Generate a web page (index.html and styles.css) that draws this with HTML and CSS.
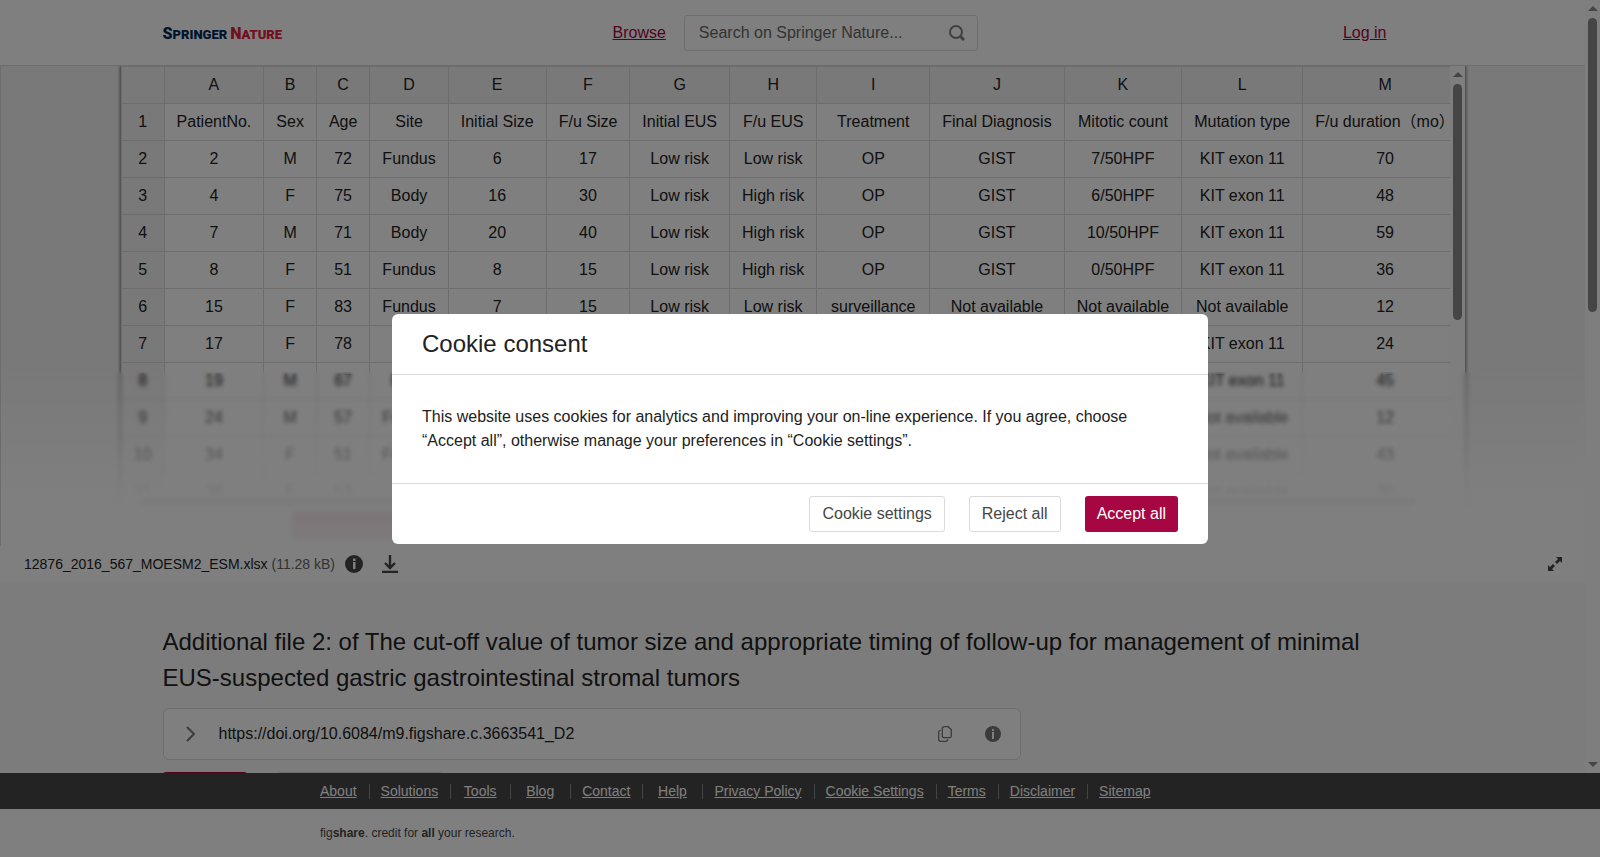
FILE: index.html
```html
<!DOCTYPE html>
<html lang="en">
<head>
  <meta charset="UTF-8" />
  <title>Additional file 2</title>
  <meta name="viewport" content="width=device-width, initial-scale=1.0"/>
  <link rel="stylesheet" href="styles.css">
</head>
<body>

  <div class="page">
    <div class="page-content">
      <header class="header">
        <div class="container header-row">
          <a class="logo" href="#"><span class="logo-springer"><b>S</b>PRINGER</span><span class="logo-nature"><b>N</b>ATURE</span></a>
          <a class="nav-link" href="#">Browse</a>
          <form class="search">
            <input type="text" aria-label="Search" placeholder="Search on Springer Nature..." />
            <button type="button" aria-label="Search">
              <svg width="16" height="16" viewBox="0 0 16 16" fill="none" stroke="#808080"><circle cx="7" cy="7" r="6" stroke-width="2"/><path d="M11.500 11.500L15 15" stroke-width="3"/></svg>
            </button>
          </form>
          <a class="nav-link login" href="#">Log in</a>
        </div>
      </header>

      <section class="viewer">
        <div class="sheet">
          <div class="sheet-scroll">
            <div class="sheet-table">
              <table>
                <thead>
                  <tr><th></th><th>A</th><th>B</th><th>C</th><th>D</th><th>E</th><th>F</th><th>G</th><th>H</th><th class="treatment">I</th><th>J</th><th>K</th><th>L</th><th>M</th></tr>
                </thead>
                <tbody>
                  <tr><th>1</th><td>PatientNo.</td><td>Sex</td><td>Age</td><td>Site</td><td>Initial Size</td><td>F/u Size</td><td>Initial EUS</td><td>F/u EUS</td><td>Treatment</td><td>Final Diagnosis</td><td>Mitotic count</td><td>Mutation type</td><td>F/u duration（mo）</td></tr>
                  <tr><th>2</th><td>2</td><td>M</td><td>72</td><td>Fundus</td><td>6</td><td>17</td><td>Low risk</td><td>Low risk</td><td>OP</td><td>GIST</td><td>7/50HPF</td><td>KIT exon 11</td><td>70</td></tr>
                  <tr><th>3</th><td>4</td><td>F</td><td>75</td><td>Body</td><td>16</td><td>30</td><td>Low risk</td><td>High risk</td><td>OP</td><td>GIST</td><td>6/50HPF</td><td>KIT exon 11</td><td>48</td></tr>
                  <tr><th>4</th><td>7</td><td>M</td><td>71</td><td>Body</td><td>20</td><td>40</td><td>Low risk</td><td>High risk</td><td>OP</td><td>GIST</td><td>10/50HPF</td><td>KIT exon 11</td><td>59</td></tr>
                  <tr><th>5</th><td>8</td><td>F</td><td>51</td><td>Fundus</td><td>8</td><td>15</td><td>Low risk</td><td>High risk</td><td>OP</td><td>GIST</td><td>0/50HPF</td><td>KIT exon 11</td><td>36</td></tr>
                  <tr><th>6</th><td>15</td><td>F</td><td>83</td><td>Fundus</td><td>7</td><td>15</td><td>Low risk</td><td>Low risk</td><td>surveillance</td><td>Not available</td><td>Not available</td><td>Not available</td><td>12</td></tr>
                  <tr><th>7</th><td>17</td><td>F</td><td>78</td><td></td><td></td><td></td><td></td><td></td><td></td><td></td><td></td><td>KIT exon 11</td><td>24</td></tr>
                  <tr><th>8</th><td>19</td><td>M</td><td>67</td><td>Body</td><td></td><td></td><td></td><td></td><td></td><td></td><td></td><td>KIT exon 11</td><td>45</td></tr>
                  <tr><th>9</th><td>24</td><td>M</td><td>57</td><td>Fundus</td><td></td><td></td><td></td><td></td><td></td><td></td><td></td><td>Not available</td><td>12</td></tr>
                  <tr><th>10</th><td>34</td><td>F</td><td>51</td><td>Fundus</td><td></td><td></td><td></td><td></td><td></td><td></td><td></td><td>Not available</td><td>43</td></tr>
                  <tr><th>11</th><td>36</td><td>F</td><td>53</td><td></td><td></td><td></td><td></td><td></td><td></td><td></td><td></td><td>Not available</td><td>30</td></tr>
                </tbody>
              </table>
            </div>
            <div class="scrollbar-x"><span class="thumb-x"></span></div>
          </div>
          <div class="scrollbar">
            <span class="arrow-up"></span>
            <span class="thumb"></span>
          </div>
        </div>
        <div class="sheet-tabs"><span class="tab-label">Sheets</span><span class="tab"></span></div>
        <div class="viewer-fade"></div>
      </section>

      <div class="file-bar">
        <span class="file-name">12876_2016_567_MOESM2_ESM.xlsx <span class="file-size">(11.28 kB)</span></span>
        <button class="icon-btn" type="button" aria-label="File info">
          <svg width="18" height="18" viewBox="0 0 18 18"><circle cx="9" cy="9" r="9" fill="#464646"/><path d="M8 3.500h2.500v2.500H8zM8 7h2.500v7H8z" fill="#fff"/></svg>
        </button>
        <button class="icon-btn" type="button" aria-label="Download">
          <svg width="18" height="18" viewBox="0 0 18 18" fill="none" stroke="#464646" stroke-width="2.400"><path d="M9 0v13M4 8l5 5 5-5M1 17h16"/></svg>
        </button>
        <button class="icon-btn expand" type="button" aria-label="Full screen">
          <svg width="14" height="14" viewBox="0 0 14 14"><path d="M8 0h6v6l-2-2-3 3-2-2 3-3zM6 14H0V8l2 2 3-3 2 2-3 3z" fill="#464646"/></svg>
        </button>
      </div>

      <main class="details">
        <div class="container">
          <h1>Additional file 2: of The cut-off value of tumor size and appropriate timing of follow-up for management of minimal EUS-suspected gastric gastrointestinal stromal tumors</h1>
          <div class="doi">
            <button class="icon-btn doi-toggle" type="button" aria-label="Expand">
              <svg width="10" height="16" viewBox="0 0 10 16" fill="none" stroke="#777" stroke-width="2"><path d="M1 1l7 7-7 7"/></svg>
            </button>
            <span class="doi-text">https://doi.org/10.6084/m9.figshare.c.3663541_D2</span>
            <button class="icon-btn" type="button" aria-label="Copy">
              <svg width="14" height="16" viewBox="0 0 14 16" fill="none" stroke="#777" stroke-width="1.300"><path d="M6 .7h4.300l3 3V10a1.700 1.700 0 0 1-1.700 1.700H6A1.700 1.700 0 0 1 4.300 10V2.400A1.700 1.700 0 0 1 6 .7zM2.700 4.300a2 2 0 0 0-2 2v7a2 2 0 0 0 2 2h5a2 2 0 0 0 2-2"/></svg>
            </button>
            <button class="icon-btn" type="button" aria-label="DOI info">
              <svg width="16" height="16" viewBox="0 0 16 16"><circle cx="8" cy="8" r="8" fill="#777"/><path d="M7 3h2v2H7zM7 6h2v7H7z" fill="#fff"/></svg>
            </button>
          </div>
          <div class="actions">
            <span class="action-primary"></span>
            <span class="action-secondary"></span>
          </div>
        </div>
      </main>
    </div>

    <div class="scrollbar page-scrollbar">
      <span class="arrow-up"></span>
      <span class="thumb"></span>
      <span class="arrow-down"></span>
    </div>
  </div>

  <footer>
    <nav class="footer-links">
      <span><a href="#">About</a></span>
      <span><a href="#">Solutions</a></span>
      <span><a href="#">Tools</a></span>
      <span><a href="#">Blog</a></span>
      <span><a href="#">Contact</a></span>
      <span><a href="#">Help</a></span>
      <span><a href="#">Privacy Policy</a></span>
      <span><a href="#">Cookie Settings</a></span>
      <span><a href="#">Terms</a></span>
      <span><a href="#">Disclaimer</a></span>
      <span><a href="#">Sitemap</a></span>
    </nav>
    <div class="footer-credit">fig<b>share</b>. credit for <b>all</b> your research.</div>
  </footer>

  <div class="overlay">
    <div class="dialog" role="dialog" aria-labelledby="cookie-title">
      <h2 id="cookie-title">Cookie consent</h2>
      <p>This website uses cookies for analytics and improving your on-line experience. If you agree, choose “Accept all”, otherwise manage your preferences in “Cookie settings”.</p>
      <div class="dialog-buttons">
        <button type="button">Cookie settings</button>
        <button type="button">Reject all</button>
        <button type="button" class="primary">Accept all</button>
      </div>
    </div>
  </div>

</body>
</html>
```

FILE: styles.css
```css
* {
  box-sizing: border-box;
}

body {
  margin: 0;
  height: 100vh;
  display: flex;
  flex-direction: column;
  overflow: hidden;
  background: #fff;
  color: #222;
  font-family: "Liberation Sans", "Noto Sans CJK SC", Arial, sans-serif;
  font-size: 16px;
  line-height: 24px;
}

button, input {
  font: inherit;
}

svg {
  display: block;
}

.page {
  flex: 1;
  min-height: 0;
  display: flex;
}

.page-content {
  flex: 1;
  min-width: 0;
  overflow: hidden;
  background: #f9f9f9;
}

.container {
  max-width: 1260px;
  margin: 0 auto;
}

/* header */
.header {
  background: #fff;
  border-bottom: 1px solid #dadada;
}

.header-row {
  display: flex;
  align-items: center;
  height: 65px;
}

.logo {
  flex: 0 0 450px;
  display: flex;
  gap: 3px;
  padding-top: 3px;
  font-family: Roboto, sans-serif;
  font-size: 13px;
  font-weight: 900;
  text-decoration: none;
}

.logo b {
  font-size: 16px;
  font-weight: 900;
}

.logo-springer {
  color: #01285a;
}

.logo-nature {
  color: #e3203c;
}

.nav-link {
  color: #a60641;
}

.search {
  display: flex;
  align-items: center;
  width: 294px;
  height: 36px;
  margin-left: 18px;
  padding: 0 12px 0 14px;
  border: 1px solid #dadada;
  border-radius: 3px;
}

.search input {
  flex: 1;
  min-width: 0;
  padding: 0;
  border: 0;
  outline: 0;
  background: none;
}

.search input::placeholder {
  color: #666;
  opacity: 1;
}

.search button,
.icon-btn {
  padding: 0;
  border: 0;
  background: none;
}

.login {
  margin-left: auto;
  margin-right: 36px;
}

/* spreadsheet preview */
.viewer {
  position: relative;
  height: 480px;
  border-left: 1px solid #dadada;
  background: #f3f3f3;
  overflow: hidden;
}

.sheet {
  display: flex;
  width: 85%;
  height: 443px;
  margin: 0 auto;
  border: 1px solid #aaa;
  border-width: 0 1px;
  background: #fff;
  box-shadow: 0 0 3px #777;
}

.sheet-scroll {
  flex: 1;
  display: flex;
  flex-direction: column;
  min-width: 0;
}

.sheet-table {
  flex: 1;
  min-height: 0;
  overflow: hidden;
}

.sheet table {
  border-collapse: collapse;
  width: max-content;
}

.sheet th,
.sheet td {
  height: 37px;
  padding: 6px 12px;
  border: 1px solid #dadada;
  font-weight: normal;
  text-align: center;
  white-space: nowrap;
}

.sheet th {
  background: #f3f3f3;
}

.sheet .treatment {
  min-width: 113px;
}

.scrollbar-x {
  flex: 0 0 15px;
  padding: 3px 34px 3px 18px;
  background: #fcfcfc;
}

.thumb-x {
  display: block;
  height: 9px;
  border-radius: 5px;
  background: #aaa;
}

.sheet-tabs {
  display: flex;
  align-items: center;
  width: 85%;
  height: 32px;
  margin: 0 auto;
  padding-left: 68px;
  background: #fff;
}

.tab-label {
  width: 104px;
  color: #bbb;
  font-size: 14px;
}

.tab {
  width: 200px;
  height: 28px;
  border-radius: 4px;
  background: #a60641;
}

.viewer-fade {
  position: absolute;
  left: 0;
  right: 0;
  bottom: 0;
  height: 174px;
  background: linear-gradient(rgba(255, 255, 255, 0), rgba(255, 255, 255, 0.9) 68%, rgba(255, 255, 255, 0.96));
  backdrop-filter: blur(2px);
}

.scrollbar {
  display: flex;
  flex-direction: column;
  align-items: center;
  flex: 0 0 15px;
  padding: 6px 0;
  background: #fcfcfc;
}

.arrow-up,
.arrow-down {
  border: 5px solid transparent;
}

.arrow-up {
  border-top: 0;
  border-bottom-color: #8b8b8b;
}

.arrow-down {
  margin-top: auto;
  border-bottom: 0;
  border-top-color: #8b8b8b;
}

.thumb {
  width: 9px;
  height: 236px;
  margin-top: 7px;
  border-radius: 5px;
  background: #8b8b8b;
}

.page-scrollbar .thumb {
  height: 294px;
}

/* file bar */
.file-bar {
  display: flex;
  align-items: center;
  height: 36px;
  padding: 0 23px 0 24px;
  background: #fff;
  font-size: 14px;
}

.file-name {
  margin-right: 10px;
}

.file-size {
  color: #666;
}

.file-bar .icon-btn {
  margin-right: 18px;
}

.file-bar .expand {
  margin-left: auto;
  margin-right: 0;
}

/* item details */
.details {
  padding-top: 42px;
}

.details h1 {
  margin: 0 0 12px;
  font-size: 24px;
  font-weight: normal;
  line-height: 36px;
}

.doi {
  display: flex;
  align-items: center;
  max-width: 858px;
  height: 52px;
  padding: 0 19px 0 22px;
  border: 1px solid #dadada;
  border-radius: 6px;
  background: #fff;
}

.doi-toggle {
  margin-right: 23px;
}

.doi-text {
  margin-right: auto;
}

.doi .icon-btn + .icon-btn {
  margin-left: 33px;
}

.actions {
  display: flex;
  gap: 30px;
  margin-top: 12px;
}

.action-primary,
.action-secondary {
  width: 84px;
  height: 36px;
  border-radius: 3px;
  background: #a60641;
}

.action-secondary {
  width: 166px;
  border: 1px solid #dadada;
  background: #fff;
}

/* footer */
.footer-links {
  display: flex;
  align-items: center;
  height: 36px;
  padding-left: 20%;
  background: #464646;
  font-size: 14px;
  line-height: 15px;
}

.footer-links span {
  min-width: 60px;
  padding: 0 12px 0 11px;
  border-right: 1px solid #888;
  text-align: center;
}

.footer-links span:first-child {
  min-width: 0;
  padding-left: 0;
}

.footer-links span:last-child {
  border-right: 0;
}

.footer-links a {
  color: #fff;
}

.footer-credit {
  height: 48px;
  padding-left: 20%;
  background: #fff;
  color: #464646;
  font-size: 12px;
  line-height: 48px;
}

/* cookie dialog */
.overlay {
  position: fixed;
  inset: 0;
  display: flex;
  align-items: center;
  justify-content: center;
  background: rgba(0, 0, 0, 0.5);
}

.dialog {
  width: 816px;
  max-width: 100%;
  border-radius: 6px;
  background: #fff;
}

.dialog h2 {
  margin: 0;
  padding: 12px 30px;
  border-bottom: 1px solid #dadada;
  font-size: 24px;
  font-weight: normal;
  line-height: 36px;
}

.dialog p {
  margin: 0;
  padding: 30px;
}

.dialog-buttons {
  display: flex;
  justify-content: flex-end;
  gap: 24px;
  padding: 12px 30px;
  border-top: 1px solid #dadada;
}

.dialog-buttons button {
  height: 36px;
  padding: 0 12px;
  border: 1px solid #dadada;
  border-radius: 3px;
  background: #fff;
  color: #464646;
}

.dialog-buttons .primary {
  border: 0;
  background: #a60641;
  color: #fff;
}
```
